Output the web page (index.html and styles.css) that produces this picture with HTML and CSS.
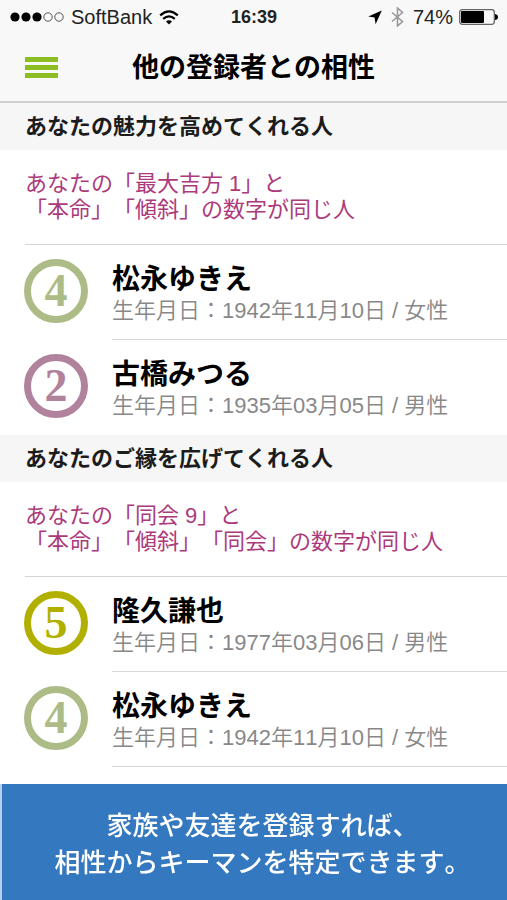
FILE: index.html
```html
<!DOCTYPE html>
<html lang="ja">
<head>
<meta charset="utf-8">
<meta name="viewport" content="width=device-width, initial-scale=1">
<title>他の登録者との相性</title>
<link rel="stylesheet" href="styles.css">
</head>
<body>
<header class="top">
  <div class="status">
    <div class="status-left">
      <svg class="signal" viewBox="0 0 54 12" width="54" height="12" aria-hidden="true">
        <circle cx="5" cy="6" r="4.6"/><circle cx="16" cy="6" r="4.6"/><circle cx="27" cy="6" r="4.6"/>
        <circle class="off" cx="38" cy="6" r="4.2"/><circle class="off" cx="49" cy="6" r="4.2"/>
      </svg>
      <span>SoftBank</span>
      <svg class="wifi" viewBox="0 0 20 15" width="20" height="15" aria-hidden="true">
        <path class="arc" d="M1.2 5.4Q10-2.6 18.8 5.4M4.2 8.9Q10 3.7 15.8 8.9"/>
        <path d="M7 11.4Q10 9.2 13 11.4L10 14.6Z"/>
      </svg>
    </div>
    <time class="clock">16:39</time>
    <div class="status-right">
      <svg class="location" viewBox="0 0 14 15" width="14" height="15" aria-hidden="true">
        <path d="M13.8.4L.3 6.6 6.6 7.6 7.6 14.2Z"/>
      </svg>
      <svg class="bluetooth" viewBox="0 0 13 20" width="13" height="20" aria-hidden="true">
        <path d="M1 5.5L11.5 14.5 6.5 19V1L11.5 5.5 1 14.5"/>
      </svg>
      <span class="charge">74%
        <svg class="battery" viewBox="0 0 39 16" width="39" height="16" aria-hidden="true">
          <rect class="shell" x=".7" y=".7" width="34.6" height="14.6" rx="2.5"/>
          <rect x="2" y="2" width="23" height="12" rx="1"/>
          <path d="M36 5Q39 5.5 39 8T36 11Z"/>
        </svg>
      </span>
    </div>
  </div>
  <nav class="bar">
    <button class="menu" type="button" aria-label="メニュー"><i></i><i></i><i></i></button>
    <h1>他の登録者との相性</h1>
  </nav>
</header>

<main>
  <section>
    <h2>あなたの魅力を高めてくれる人</h2>
    <p class="rule">あなたの「最大吉方 1」と<br>「本命」「傾斜」の数字が同じ人</p>
    <ul class="people">
      <li>
        <span class="star sage">4</span>
        <div class="person"><h3>松永ゆきえ</h3><p>生年月日：1942年11月10日 / 女性</p></div>
      </li>
      <li>
        <span class="star mauve">2</span>
        <div class="person"><h3>古橋みつる</h3><p>生年月日：1935年03月05日 / 男性</p></div>
      </li>
    </ul>
  </section>
  <section>
    <h2>あなたのご縁を広げてくれる人</h2>
    <p class="rule">あなたの「同会 9」と<br>「本命」「傾斜」「同会」の数字が同じ人</p>
    <ul class="people more">
      <li>
        <span class="star olive">5</span>
        <div class="person"><h3>隆久謙也</h3><p>生年月日：1977年03月06日 / 男性</p></div>
      </li>
      <li>
        <span class="star sage">4</span>
        <div class="person"><h3>松永ゆきえ</h3><p>生年月日：1942年11月10日 / 女性</p></div>
      </li>
    </ul>
  </section>
</main>

<aside class="caption">家族や友達を登録すれば、<br>相性からキーマンを特定できます。</aside>
</body>
</html>
```
FILE: styles.css
```css
* {
  box-sizing: border-box;
}

body,
h1,
h2,
h3,
p,
ul {
  margin: 0;
  padding: 0;
}

body {
  background: #fff;
  color: #000;
  font-family: "Liberation Sans", "Noto Sans CJK JP", sans-serif;
  font-kerning: none;
  text-spacing-trim: space-all;
}

svg {
  display: block;
  flex: none;
}

.top {
  background: #f8f8f8;
  border-bottom: 2px solid #cfd0d0;
}

.status {
  display: grid;
  grid-template-columns: 1fr auto 1fr;
  align-items: center;
  height: 34px;
  padding: 0 9px 0 10px;
  font-size: 20px;
  color: #222;
}

.status-left,
.status-right,
.charge {
  display: flex;
  align-items: center;
}

.status-left {
  gap: 7px;
}

.status-right {
  justify-content: flex-end;
  gap: 9px;
}

.charge {
  gap: 6px;
}

.signal .off {
  fill: none;
  stroke: #555;
  stroke-width: 1;
}

.wifi .arc {
  fill: none;
  stroke: #000;
  stroke-width: 2.2;
}

.bluetooth {
  fill: none;
  stroke: #999;
  stroke-width: 1.6;
}

.battery .shell {
  fill: none;
  stroke: #666;
  stroke-width: 1.3;
}

.clock {
  font-size: 18px;
  font-weight: 700;
}

.bar {
  display: grid;
  grid-template-columns: 1fr auto 1fr;
  align-items: center;
  height: 67px;
  padding: 0 25px;
}

.menu {
  display: grid;
  gap: 3px;
  width: 33px;
  padding: 0;
  border: 0;
  background: none;
}

.menu i {
  height: 5px;
  background: #8cbe22;
}

h1 {
  font-size: 27px;
  line-height: 40px;
  font-weight: 700;
}

h2 {
  padding: 0 25px;
  background: #f6f6f6;
  color: #1c1c1c;
  font-size: 22px;
  line-height: 47px;
  font-weight: 700;
}

.rule {
  margin-left: 25px;
  padding: 21px 0;
  border-bottom: 1px solid #d5d5d5;
  color: #ab3a7c;
  font-size: 22px;
  line-height: 26px;
}

.people {
  margin-left: 24px;
  list-style: none;
}

.people li {
  display: flex;
  gap: 24px;
}

.star {
  display: flex;
  align-items: center;
  justify-content: center;
  flex: none;
  width: 64px;
  height: 64px;
  margin-top: 14px;
  border: 7px solid;
  border-radius: 50%;
  font-family: "Liberation Serif", serif;
  font-size: 46px;
  line-height: 50px;
  font-weight: 700;
}

.sage {
  color: #adbc87;
}

.mauve {
  color: #b0829c;
}

.olive {
  color: #b1b000;
}

.person {
  flex: 1;
  padding: 16px 0 16px;
  border-bottom: 1px solid #d8d8d8;
}

.people:not(.more) li:last-child .person {
  border-bottom-color: transparent;
}

.people.more {
  padding-bottom: 95px;
  border-bottom: 1px solid #d8d8d8;
}

h3 {
  font-size: 28px;
  line-height: 38px;
  font-weight: 700;
}

.person p {
  color: #888;
  font-size: 22px;
  line-height: 24px;
  font-weight: 350;
}

.caption {
  position: fixed;
  right: 0;
  bottom: 0;
  left: 0;
  padding: 24px 0 18px 16px;
  border-left: 2px solid #b4d0ea;
  background: rgb(48 117 191 / 98%);
  color: #fff;
  font-size: 26px;
  line-height: 37px;
  font-weight: 500;
  text-align: center;
}
```
